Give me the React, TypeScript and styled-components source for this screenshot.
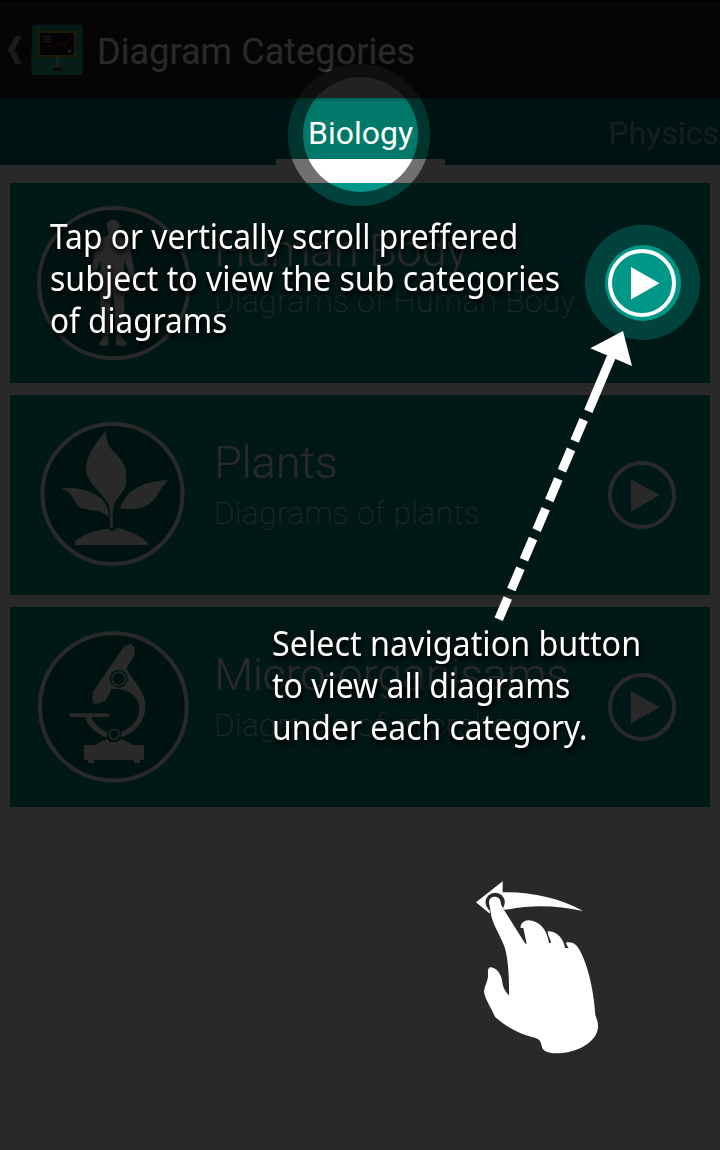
import React from 'react';
import styled, { createGlobalStyle } from 'styled-components';

const GlobalStyle = createGlobalStyle`
  * { box-sizing: border-box; }
  body { margin: 0; background: #fff; }
`;

const Screen = styled.div`
  position: relative;
  width: 720px;
  height: 1150px;
  overflow: hidden;
  background: #fff;
  font-family: Roboto, sans-serif;
`;

const ActionBar = styled.header`
  display: flex;
  align-items: center;
  height: 98px;
  padding: 2px 0 0 7px;
  background: linear-gradient(#222 0, #222 95px, #181818 98px);
  border-top: 2px solid #000;
`;

const BackIcon = styled.svg`
  width: 16px;
  height: 30px;
  margin: 0 8px 2px 0;
`;

const AppIcon = styled.svg`
  width: 52px;
  height: 52px;
  margin: 0 14px 2px 0;
`;

const PageTitle = styled.h1`
  margin: 2px 0 0;
  font-size: 36px;
  font-weight: 400;
  line-height: 42px;
  letter-spacing: 0.06px;
  color: #fff;
  white-space: nowrap;
`;

const TabBar = styled.nav`
  display: flex;
  height: 67px;
  padding-left: 276px;
  background: linear-gradient(#006257 0, #00796b 5px);
`;

const Tab = styled.div<{ $active?: boolean }>`
  flex: none;
  width: 169px;
  height: 67px;
  padding-top: 16px;
  text-align: center;
  font-size: 32px;
  line-height: 38px;
  white-space: nowrap;
  color: ${(p) => (p.$active ? '#fff' : 'rgba(255,255,255,0.5)')};
  border-bottom: 6px solid ${(p) => (p.$active ? '#fff' : 'transparent')};
  & + & { margin-left: 134px; }
`;

const CategoryList = styled.main`
  display: flex;
  flex-direction: column;
  gap: 8px;
  padding-top: 18px;
`;

const CategoryRow = styled.div`
  padding: 0 10px 2px;
  border-bottom: 2px solid #e9e9e9;
`;

const Card = styled.section`
  display: flex;
  align-items: center;
  height: 200px;
  padding: 0 34px 0 10px;
  background: #009688;
`;

const CardIcon = styled.svg`
  flex: none;
  width: 180px;
  height: 200px;
`;

const CardText = styled.div`
  flex: 1;
  height: 200px;
  padding: 41px 0 0 14px;
  white-space: nowrap;
`;

const CardTitle = styled.h2<{ $spacing: number }>`
  margin: 0;
  height: 54px;
  font-size: 45px;
  font-weight: 300;
  line-height: 54px;
  letter-spacing: ${(p) => p.$spacing}px;
  color: #fff;
`;

const CardSubtitle = styled.p`
  margin: 5px 0 0;
  font-size: 31px;
  font-weight: 100;
  line-height: 38px;
  letter-spacing: 0.73px;
  color: #fff;
`;

const PlayIcon = styled.svg`
  flex: none;
  width: 68px;
  height: 68px;
`;

const Overlay = styled.div`
  position: absolute;
  inset: 0;
`;

const OverlayArt = styled.svg`
  position: absolute;
  inset: 0;
`;

const Note = styled.div<{ $x: number; $y: number }>`
  position: absolute;
  left: ${(p) => p.$x}px;
  top: ${(p) => p.$y}px;
  font-family: 'Noto Sans', sans-serif;
  font-size: 35px;
  line-height: 42px;
  color: #fff;
  text-shadow: 1px 3px 5px #000, 1px 3px 8px rgba(0, 0, 0, 0.8);
`;

const NoteLine = styled.div<{ $scale: number }>`
  width: max-content;
  transform: scaleX(${(p) => p.$scale});
  transform-origin: 0 0;
  white-space: nowrap;
`;

const HumanArt = () => (
  <CardIcon viewBox="0 9 540 600">
    <ellipse cx="282" cy="309.500" rx="225" ry="225.500" fill="#00796b" stroke="#fff" strokeWidth="12" />
    <path
      fill="#fff"
      d="M277 119c-11 0-18 9-16 21 0 5 2 9 4 12l0 12c-8 9-26 9-33 15-9 8-8 32-10 50-5 18-8 42-11 60-4 7-7 17-6 26 4 9 12 1 14-7l4-19c7-15 12-31 17-48 2 17 3 27 1 39-5 24-5 45 0 69 2 20-2 37 1 59l7 61c-1 8-10 17-12 24 2 6 24 5 28 2 2-8-1-18 0-28 4-30 6-60 5-88l7-46 7 46c-1 28 1 58 5 88 1 10-2 20 0 28 4 3 30 4 32-2-2-7-15-16-16-24l7-61c3-22-1-39 1-59 5-24 5-45 0-69-2-12-1-22 1-39 5 17 10 33 17 48l7 19c5 8 14 11 18 4 0-9-5-16-11-23-3-18-6-42-11-60-2-18-1-42-10-50-7-6-22-6-30-15v-12c2-3 4-7 4-12 2-12-5-21-17-21z"
    />
  </CardIcon>
);

const PlantArt = () => (
  <CardIcon viewBox="0 -15 540 600">
    <circle cx="277.500" cy="282" r="210" fill="#00796b" stroke="#fff" strokeWidth="12" />
    <g fill="#fff">
      <path d="M259 91C237 116 198 165 198 207C198 250 250 275 267 318C272 335 270 360 270 384H279C277 355 278 325 284 310C292 292 318 270 318 247V219C318 188 296 172 276 149C262 132 257 116 259 91z" />
      <path d="M123 265c36-3 74 1 105 19 25 15 38 36 38 66-12-9-24-16-40-18-21-3-43-4-55-18-12-13-16-40-48-49z" />
      <path d="M444 240c-26 28-35 61-65 77-22 11-49 12-79 9 11-38 41-63 78-75 22-7 43-9 66-11z" />
      <path d="M165 435V424C184 406 227 389 266 386L276 395L288 386C297 381 304 387 315 391C340 399 366 411 384 429V435z" />
    </g>
  </CardIcon>
);

const MicroscopeArt = () => (
  <CardIcon viewBox="0 21 540 600">
    <ellipse cx="280" cy="320.500" rx="220" ry="221" fill="#00796b" stroke="#fff" strokeWidth="12" />
    <g fill="#fff">
      <path d="M309 144L317 136L325 137L327 132H336L337 138L345 141L343 148L345 159L338 175L319 205C330 228 347 246 361 269C370 283 376 300 376 320C376 362 344 400 303 412V396C339 383 360 356 357 319C353 288 325 270 296 268L274 267L268 282L254 303L242 306L236 315L229 310L219 311L222 303L216 298L218 289V275L226 265z" />
      <rect x="148" y="340" width="119" height="11" rx="5.500" />
      <path d="M194 348H214C221 370 238 389 262 396V413C228 403 203 379 194 348z" />
      <path d="M192 440q0-5 5-5h27l37-19c10 14 31 14 43 0l36 19h27q5 0 5 5v35q0 5-5 5h-7v9h-18v-9H222v9h-18v-9h-7q-5 0-5-5z" />
    </g>
    <circle cx="296" cy="236" r="27" fill="#00796b" />
    <circle cx="296" cy="236" r="20" fill="none" stroke="#fff" strokeWidth="4" />
    <circle cx="282" cy="403" r="21" fill="#00796b" />
    <circle cx="282" cy="403" r="15" fill="none" stroke="#fff" strokeWidth="4" />
  </CardIcon>
);

const categories = [
  { title: 'Human Body', subtitle: 'Diagrams of Human Body', spacing: -0.2, Art: HumanArt },
  { title: 'Plants', subtitle: 'Diagrams of plants', spacing: -0.1, Art: PlantArt },
  { title: 'Micro-organisams', subtitle: 'Diagrams of microbes', spacing: -0.25, Art: MicroscopeArt },
];

export default function App() {
  return (
    <>
      <GlobalStyle />
      <Screen>
        <ActionBar>
          <BackIcon viewBox="0 0 16 30">
            <path d="M8.500 1h6L7.500 15l7 14h-6L.8 15z" fill="#aaa" />
          </BackIcon>
          <AppIcon viewBox="0 0 52 52">
            <rect x="0.700" y="0.500" width="50.600" height="50.600" rx="4" fill="#20a784" />
            <path d="M.7 26h50.600v21a4 4 0 0 1-4 4H4.700a4 4 0 0 1-4-4z" fill="#2fb18d" />
            <rect x="7.800" y="8" width="36" height="24" fill="#17131b" stroke="#e0a012" strokeWidth="2" />
            <path d="M12 12.500h8M12 15h8M12 17.500h8" stroke="#b9b9b9" strokeWidth="1" />
            <path d="M12 27l7-5.500 4.500 3.500 6-6 3.500 2.500 6-7" fill="none" stroke="#a52a33" strokeWidth="1.300" />
            <circle cx="39" cy="14.800" r="1.500" fill="#a52a33" />
            <rect x="37" y="26" width="3" height="2.500" fill="#ddd" />
            <path d="M26.500 33v11" stroke="#c9c9c9" strokeWidth="2.500" />
            <path d="M21.500 46.500q1-3 5-3t5 3z" fill="#52202a" />
          </AppIcon>
          <PageTitle>Diagram Categories</PageTitle>
        </ActionBar>
        <TabBar>
          <Tab $active>Biology</Tab>
          <Tab>Physics</Tab>
        </TabBar>
        <CategoryList>
          {categories.map(({ title, subtitle, spacing, Art }) => (
            <CategoryRow key={title}>
              <Card>
                <Art />
                <CardText>
                  <CardTitle $spacing={spacing}>{title}</CardTitle>
                  <CardSubtitle>{subtitle}</CardSubtitle>
                </CardText>
                <PlayIcon viewBox="0 0 68 68">
                  <circle cx="34" cy="34" r="32" fill="none" stroke="#fff" strokeWidth="4" />
                  <path d="M23 18l28.500 16.300L23 50.500z" fill="#fff" />
                </PlayIcon>
              </Card>
            </CategoryRow>
          ))}
        </CategoryList>

        <Overlay>
          <OverlayArt width="720" height="1150" viewBox="0 0 720 1150">
            <mask id="spotlights" maskUnits="userSpaceOnUse" x="0" y="0" width="720" height="1150">
              <rect width="720" height="1150" fill="#fff" />
              <circle cx="359" cy="134.900" r="71.200" fill="#aaa" />
              <circle cx="642.500" cy="282.400" r="57.600" fill="#aaa" />
              <circle cx="360.500" cy="134.500" r="57.500" fill="#000" />
              <circle cx="643" cy="283" r="38" fill="#000" />
            </mask>
            <rect width="720" height="1150" fill="rgba(0,0,0,0.84)" mask="url(#spotlights)" />
            <g transform="translate(470 320) scale(.33333)">
              <path d="M459 33L361 85l125 53z" fill="#fff" />
              <path d="M424 110L355 274" stroke="#fff" strokeWidth="27" />
              <path d="M341 299L86 898" stroke="#fff" strokeWidth="27" strokeDasharray="69.500 27.400" />
            </g>
            <g transform="translate(460 860) scale(.33333)">
              <path d="M48 127L128 64v33c80-2 168 16 241 56-82-18-162-19-238-2l-43 9z" fill="#fff" />
              <circle cx="105.500" cy="127" r="29" fill="#292929" />
              <path d="M88 148L133 146L134 153L92 164z" fill="#292929" />
              <path
                fill="#fff"
                d="M87 128C87 106 119 104 122 127C123 138 131 147 136 156L195 250L200 252L190 204L181 203C183 190 192 181 205 181C236 183 261 205 267 249H273C272 237 262 225 263 214C290 211 312 238 315 264L326 265C323 259 317 254 319 247C330 245 342 248 350 257C380 295 402 390 406 465C409 476 415 484 414 501C412 546 350 580 290 580C262 579 247 574 245 557C241 538 234 536 216 531C180 522 137 500 106 472C98 452 74 415 72 395C73 379 83 364 84 350C84 337 82 326 90 322C105 321 121 337 126 359C128 385 137 394 147 406C148 360 145 300 135 265C125 230 94 190 92 155z"
              />
            </g>
          </OverlayArt>
          <Note $x={50} $y={215}>
            <NoteLine $scale={0.907}>Tap or vertically scroll preffered</NoteLine>
            <NoteLine $scale={0.917}>subject to view the sub categories</NoteLine>
            <NoteLine $scale={0.9}>of diagrams</NoteLine>
          </Note>
          <Note $x={272} $y={622}>
            <NoteLine $scale={0.922}>Select navigation button</NoteLine>
            <NoteLine $scale={0.913}>to view all diagrams</NoteLine>
            <NoteLine $scale={0.91}>under each category.</NoteLine>
          </Note>
        </Overlay>
      </Screen>
    </>
  );
}
